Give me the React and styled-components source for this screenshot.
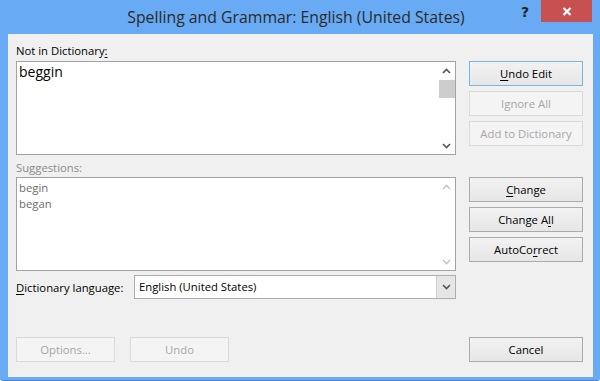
import React from 'react';
import styled, { createGlobalStyle } from 'styled-components';

const Global = createGlobalStyle`
  html, body { margin: 0; padding: 0; }
  body {
    width: 600px; height: 381px; overflow: hidden;
    font-family: "Open Sans", "Noto Sans", sans-serif;
  }
`;

const Window = styled.div`
  width: 600px;
  height: 381px;
  box-sizing: border-box;
  background: #68aaf3;
  display: flex;
  flex-direction: column;
  padding: 0 7px 3px 8px;
  border-bottom: 1px solid #4a86cf;
  border-radius: 0 0 3px 3px;
`;

const TitleBar = styled.div`
  height: 34px;
  flex: none;
  display: grid;
  grid-template-columns: 1fr auto 1fr;
  margin: 0 -7px 0 -8px;
  padding-right: 8px;
`;

const Title = styled.div`
  grid-column: 2;
  padding-top: 6px;
  font-size: 15.8px;
  line-height: 22px;
  color: #2b2b2b;
  white-space: nowrap;
`;

const Controls = styled.div`
  grid-column: 3;
  display: flex;
  justify-content: flex-end;
  align-items: flex-start;
  gap: 12px;
`;

const Help = styled.div`
  font-family: "DejaVu Sans", sans-serif;
  font-weight: bold;
  font-size: 14px;
  line-height: 14px;
  padding-top: 5px;
  color: #222;
`;

const Close = styled.div`
  width: 51px;
  height: 22px;
  background: #c75050;
  display: flex;
  align-items: center;
  justify-content: center;
`;

const Client = styled.div`
  flex: 1;
  background: #f0f0f0;
  display: grid;
  grid-template-columns: 440px 114px;
  column-gap: 13px;
  grid-template-rows: 27px 94px 22px 94px 28px 1fr 25px;
  padding: 0 0 15px 8px;
  font-size: 11.3px;
  color: #000;
`;

const Label = styled.div`
  align-self: end;
  margin-bottom: ${p => p.$mb || 2}px;
  line-height: 16px;
  color: ${p => (p.$disabled ? '#8a8a8a' : '#000')};
  white-space: nowrap;
`;

const Key = styled.span`
  text-decoration: underline;
  text-underline-offset: 2px;
`;

const ListBox = styled.div`
  grid-column: 1;
  box-sizing: border-box;
  border: 1px solid #a3a3a3;
  background: #fff;
  display: grid;
  grid-template-columns: 1fr 17px;
`;

const ListContent = styled.div`
  padding: ${p => (p.$big ? '0 2px' : '2px 2px')};
  font-size: ${p => (p.$big ? '14px' : '11.3px')};
  line-height: ${p => (p.$big ? '20px' : '16px')};
  color: ${p => (p.$disabled ? '#6e6e6e' : '#000')};
`;

const ScrollBar = styled.div`
  display: flex;
  flex-direction: column;
`;

const Arrow = styled.div`
  height: 17px;
  flex: none;
  display: flex;
  align-items: center;
  justify-content: center;
`;

const Track = styled.div`
  flex: 1;
  display: flex;
  flex-direction: column;
  align-items: stretch;
  padding: 1px 0 0 1px;
`;

const Thumb = styled.div`
  height: 18px;
  background: #cdcdcd;
`;

const Stack = styled.div`
  grid-column: 2;
  align-self: start;
  display: flex;
  flex-direction: column;
  gap: 5px;
`;

const Button = styled.div`
  box-sizing: border-box;
  height: 25px;
  width: ${p => p.$w || 114}px;
  display: flex;
  align-items: center;
  justify-content: center;
  font-size: 11.3px;
  white-space: nowrap;
  border: 1px solid ${p => (p.$default ? '#7eb4ea' : p.$disabled ? '#d9d9d9' : '#acacac')};
  background: ${p =>
    p.$disabled ? '#f4f4f4' : 'linear-gradient(#f2f2f2, #e6e6e6)'};
  color: ${p => (p.$disabled ? '#a6a6a6' : '#000')};
`;

const DictRow = styled.div`
  grid-column: 1;
  align-self: end;
  display: flex;
  align-items: center;
  height: 24px;
`;

const DictLabel = styled.div`
  width: 118px;
  flex: none;
  white-space: nowrap;
`;

const Select = styled.div`
  flex: 1;
  height: 24px;
  box-sizing: border-box;
  border: 1px solid #abadb3;
  background: #fff;
  display: flex;
`;

const SelectText = styled.div`
  flex: 1;
  padding-left: 4px;
  line-height: 22px;
`;

const DropButton = styled.div`
  width: 18px;
  background: #e6e6e6;
  border-left: 1px solid #cfcfcf;
  display: flex;
  align-items: center;
  justify-content: center;
`;

const BottomLeft = styled.div`
  grid-column: 1;
  grid-row: 7;
  display: flex;
  gap: 15px;
`;

const BottomRight = styled.div`
  grid-column: 2;
  grid-row: 7;
`;

const Chevron = ({ up, color = '#555' }) => (
  <svg width="9" height="6" viewBox="0 0 9 6">
    <polyline
      points={up ? '1,5 4.5,1.5 8,5' : '1,1 4.5,4.5 8,1'}
      fill="none"
      stroke={color}
      strokeWidth="1.6"
    />
  </svg>
);

const CloseX = () => (
  <svg width="10" height="9" viewBox="0 0 10 9">
    <path d="M1.5 1 L8.5 8 M8.5 1 L1.5 8" stroke="#fff" strokeWidth="2.2" fill="none" />
  </svg>
);

export default function App() {
  return (
    <>
      <Global />
      <Window>
        <TitleBar>
          <Title>Spelling and Grammar: English (United States)</Title>
          <Controls>
            <Help>?</Help>
            <Close><CloseX /></Close>
          </Controls>
        </TitleBar>
        <Client>
          <Label>Not in Dictionary<Key>:</Key></Label>
          <ListBox>
            <ListContent $big>beggin</ListContent>
            <ScrollBar>
              <Arrow><Chevron up /></Arrow>
              <Track><Thumb /></Track>
              <Arrow><Chevron /></Arrow>
            </ScrollBar>
          </ListBox>
          <Stack>
            <Button $default><Key>U</Key>ndo Edit</Button>
            <Button $disabled>Ignore All</Button>
            <Button $disabled>Add to Dictionary</Button>
          </Stack>

          <Label $disabled $mb={1}>Suggestions:</Label>
          <ListBox>
            <ListContent $disabled>
              <div>begin</div>
              <div>began</div>
            </ListContent>
            <ScrollBar>
              <Arrow><Chevron up color="#c6c6c6" /></Arrow>
              <Track />
              <Arrow><Chevron color="#c6c6c6" /></Arrow>
            </ScrollBar>
          </ListBox>
          <Stack>
            <Button><Key>C</Key>hange</Button>
            <Button>Change A<Key>l</Key>l</Button>
            <Button>AutoCo<Key>r</Key>rect</Button>
          </Stack>

          <DictRow>
            <DictLabel><Key>D</Key>ictionary language:</DictLabel>
            <Select>
              <SelectText>English (United States)</SelectText>
              <DropButton><Chevron /></DropButton>
            </Select>
          </DictRow>

          <BottomLeft>
            <Button $disabled $w={99}>Options...</Button>
            <Button $disabled $w={99}>Undo</Button>
          </BottomLeft>
          <BottomRight>
            <Button>Cancel</Button>
          </BottomRight>
        </Client>
      </Window>
    </>
  );
}
